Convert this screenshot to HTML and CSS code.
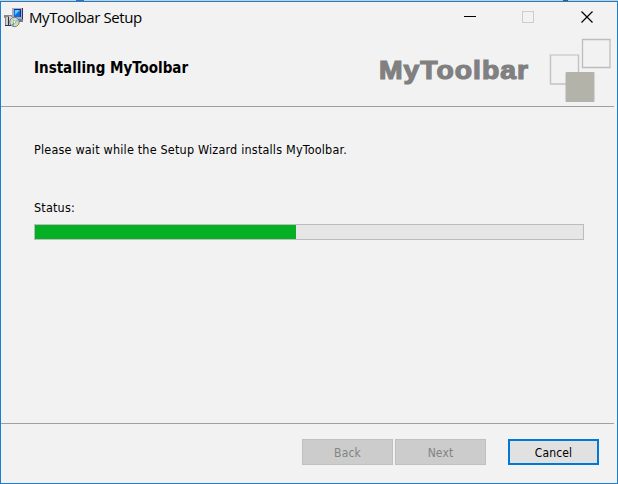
FILE: index.html
```html
<!DOCTYPE html>
<html lang="en">
<head>
<meta charset="utf-8">
<title>MyToolbar Setup</title>
<link rel="stylesheet" href="styles.css">
</head>
<body>
<div class="backdrop"></div>
<main class="window">
  <header class="titlebar">
    <svg class="app-icon" width="20" height="21" viewBox="0 0 20 21" aria-hidden="true">
      <path d="M0 8h9v2H7v9H1v-8H0z" fill="#85878a"/>
      <path d="M2 10h2v8H2zM5 9h2v9H5z" fill="#cfcfcf"/>
      <path d="M1 18h6v1H1zM4 10h1v8H4z" fill="#333"/>
      <path d="M8 1h11v11H8z" fill="#a9abc4"/>
      <path d="M19 1v12H9v-1h9V1z" fill="#33365c"/>
      <path d="M10 2h7v8h-7z" fill="#096fe0"/>
      <path d="M10 2h7v1h-7zM16 2h1v8h-1z" fill="#0b318d"/>
      <path d="M11 3h5l-5 5z" fill="#62ceff"/>
      <path d="M13 12h6v3h-6z" fill="#787b8c"/>
      <circle cx="10.5" cy="15" r="4.7" fill="#d4d9dc" stroke="#596169" stroke-width=".8"/>
      <path d="M10.5 15L7 12.5l2-1.5z" fill="#ddd84c"/>
      <path d="M10.5 15l4 2-2 2z" fill="#e6dd59"/>
      <path d="M10.5 15l-3 3 2 1z" fill="#36a7a4"/>
      <path d="M10.5 15l3-3 1 2z" fill="#68cbd0"/>
      <circle cx="10.5" cy="15" r="1.3" fill="#fff" stroke="#687" stroke-width=".5"/>
    </svg>
    <span class="caption">MyToolbar Setup</span>
    <svg class="controls" width="132" height="14" viewBox="0 0 132 14" fill="none" shape-rendering="crispEdges" aria-hidden="true">
      <path d="M0 5.5h12" stroke="#000"/>
      <path d="M58.5.5h11v11h-11z" stroke="#ccc"/>
      <path d="M117.5.5l11 11m0-11l-11 11" stroke="#000" stroke-width="1.2" shape-rendering="auto"/>
    </svg>
  </header>
  <section class="banner">
    <h1 class="heading">Installing MyToolbar</h1>
    <span class="brand">MyToolbar</span>
    <svg class="squares" width="62" height="64" viewBox="0 0 62 64" fill="none" aria-hidden="true">
      <path d="M1.5 17h28v29h-28z" stroke="#cfcfcf" stroke-width="1.6"/>
      <path d="M1.5 17v29h15M29.5 17v17" stroke="#bbb" stroke-width=".7"/>
      <path d="M33.5 1.5h27.5v28h-27.5z" stroke="#bdbdbd" stroke-width="1.3"/>
      <path d="M17 34.5h28v29H17z" fill="#b3b3a9" stroke="#b4b4ae"/>
    </svg>
  </section>
  <section class="content">
    <p class="message">Please wait while the Setup Wizard installs MyToolbar.</p>
    <p class="status">Status:</p>
    <div class="progress"><div class="fill"></div></div>
  </section>
  <footer class="actions">
    <button class="button back" disabled>Back</button>
    <button class="button next" disabled>Next</button>
    <button class="button cancel">Cancel</button>
  </footer>
</main>
</body>
</html>
```
FILE: styles.css
```css
* { box-sizing: border-box; }
body {
  margin: 0;
  width: 618px;
  height: 484px;
  overflow: hidden;
  background: #f2f2f2;
  color: #000;
  font: 12px/16px "DejaVu Sans Condensed", "DejaVu Sans", sans-serif;
  font-stretch: condensed;
}
.backdrop {
  height: 1px;
  background: linear-gradient(90deg, #ccc 76px, #496aac 76px 84px, #ccc 84px 563px, #555 563px 568px, #ccc 568px);
}
.window {
  display: flex;
  flex-direction: column;
  height: 483px;
  border: 1px solid #1c7ed0;
}
.titlebar {
  display: flex;
  align-items: flex-start;
  height: 32px;
  padding: 5px 21px 0 3px;
}
.app-icon { flex: none; }
.caption {
  margin: 0 0 0 5px;
  font: 15px/20px "Open Sans", sans-serif;
  letter-spacing: -0.42px;
  white-space: nowrap;
}
.controls { margin: 4px 0 0 auto; }
.banner {
  display: flex;
  height: 73px;
  margin-right: 3px;
  border-bottom: 1px solid #a0a0a0;
  padding-left: 33px;
}
.heading {
  width: 345px;
  margin: 24px 0 0;
  font-size: 15px;
  line-height: 20px;
  font-weight: bold;
  letter-spacing: 0;
  white-space: nowrap;
}
.brand {
  width: 170px;
  margin-top: 19px;
  color: #808080;
  font: bold 25.5px/34px "Liberation Sans", Arial, sans-serif;
  letter-spacing: 0.9px;
  -webkit-text-stroke: 1.2px #808080;
  transform: scaleX(1.11);
  transform-origin: left;
}
.squares { margin-top: 4px; flex: none; }
.content { height: 316px; padding: 35px 33px 0; }
.message, .status {
  margin: 0;
  font-size: 12.5px;
  letter-spacing: 0.19px;
  white-space: nowrap;
}
.status { margin-top: 42px; }
.progress {
  height: 16px;
  margin-top: 8px;
  border: 1px solid #bcbcbc;
  background: #e6e6e6;
}
.fill { width: 261px; height: 14px; background: #06b025; }
.actions {
  display: flex;
  flex: 1;
  margin-right: 3px;
  border-top: 1px solid #a0a0a0;
  padding: 15px 15px 0 301px;
}
.button {
  width: 91px;
  height: 26px;
  padding: 1px 0 0;
  border: 1px solid #bfbfbf;
  border-radius: 0;
  background: #ccc;
  color: #838383;
  font: inherit;
  letter-spacing: 0.15px;
}
.next { margin-left: 2px; }
.cancel {
  margin-left: 22px;
  border: 2px solid #0078d7;
  background: #e1e1e1;
  color: #000;
}
```
